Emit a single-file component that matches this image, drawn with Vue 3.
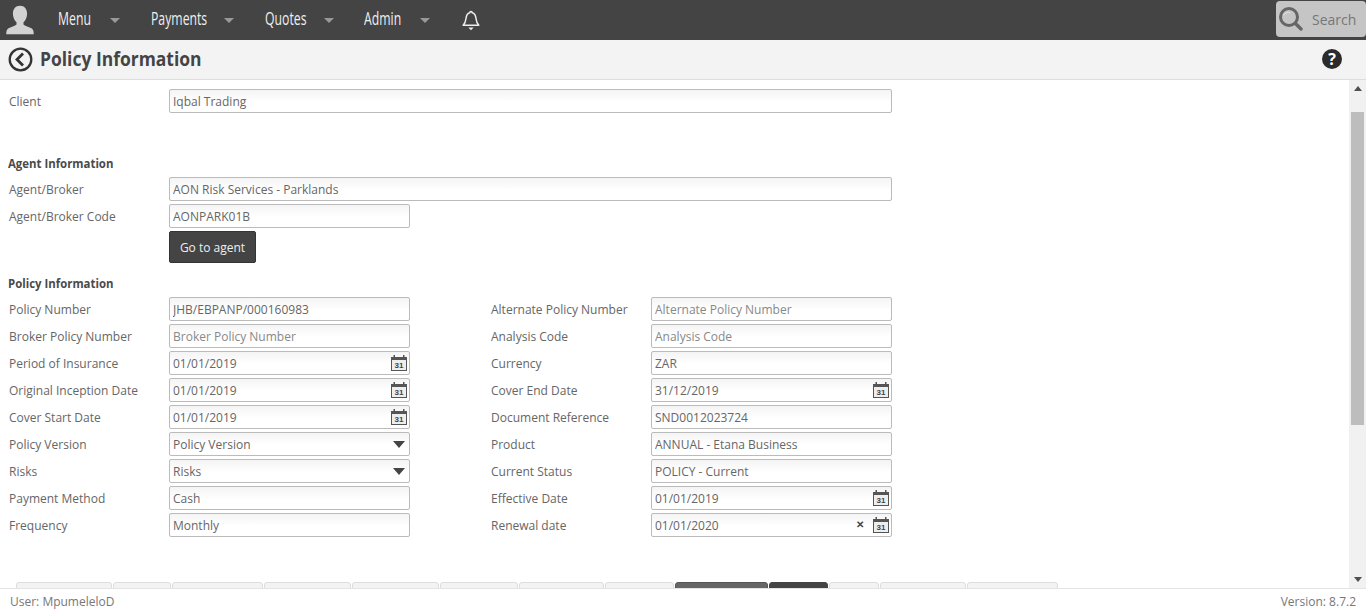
<template>
    <div class="page">
        <header class="top_bar">
            <svg class="user_icon" viewBox="0 0 36 36" width="30" height="30">
                <path d="M18 1c-5.500 0-8.500 4-8.500 9.500 0 4 1.700 8 4.300 10.300v2.700c-1.500 1.700-7 3.100-10 4.800C2 29.500 1.500 32 1.500 35h33c0-3-.5-5.500-2.300-6.700-3-1.700-8.500-3.100-10-4.800v-2.700c2.600-2.300 4.300-6.300 4.300-10.300C26.500 5 23.500 1 18 1z" fill="#d2d2d2"/>
            </svg>
            <nav class="nav_items">
                <div v-for="item in nav_items" :key="item" class="nav_item">
                    <span class="nav_label">{{ item }}</span>
                    <span class="nav_arrow"></span>
                </div>
            </nav>
            <svg class="bell_icon" viewBox="0 0 18 21" width="18" height="21">
                <path d="M9 1.500c-.7 0-1.200.5-1.200 1.200C5.300 3.300 4.300 5.500 4 8.500c-.3 2.800-1 4.800-2.800 6.800h15.600c-1.800-2-2.500-4-2.800-6.800-.3-3-1.300-5.200-3.800-5.800 0-.7-.5-1.200-1.200-1.200z" fill="none" stroke="#eee" stroke-width="1.500" stroke-linejoin="round"/>
                <path d="M6.300 17.600h5.400L9 20.300z" fill="#eee"/>
            </svg>
            <div class="search_box">
                <svg viewBox="0 0 24 24" width="24" height="24">
                    <circle cx="10" cy="10" r="8.500" fill="none" stroke="#666" stroke-width="3"/>
                    <path d="M4.500 8.500c1-2.500 4-3.700 7-2.700" fill="none" stroke="#e4e4e4" stroke-width="1"/>
                    <path d="M16.500 16.500l5.500 5.500" stroke="#666" stroke-width="3.400" stroke-linecap="round"/>
                </svg>
                <span>Search</span>
            </div>
        </header>

        <div class="title_bar">
            <svg class="back_icon" viewBox="0 0 25 25" width="25" height="25">
                <circle cx="12.500" cy="12.500" r="10.800" fill="none" stroke="#333" stroke-width="2.300"/>
                <path d="M15 6.500l-6 6 6 6" fill="none" stroke="#333" stroke-width="2.800"/>
            </svg>
            <h1>Policy Information</h1>
            <div class="help_icon">?</div>
        </div>

        <div class="content_wrap">
            <main class="content">
                <div class="form_row client_row">
                    <label>Client</label>
                    <input class="wide" value="Iqbal Trading" readonly>
                </div>

                <h3 class="agent_head">Agent Information</h3>
                <div class="form_row">
                    <label>Agent/Broker</label>
                    <input class="wide" value="AON Risk Services - Parklands" readonly>
                </div>
                <div class="form_row">
                    <label>Agent/Broker Code</label>
                    <input class="half" value="AONPARK01B" readonly>
                </div>
                <div class="form_row">
                    <label></label>
                    <button class="agent_btn">Go to agent</button>
                </div>

                <h3 class="policy_head">Policy Information</h3>
                <div class="policy_grid">
                    <template v-for="field in policy_fields" :key="field.label">
                        <label>{{ field.label }}</label>
                        <div class="field">
                            <input :value="field.value" :placeholder="field.label" readonly>
                            <span v-if="field.clear" class="clear_x">✕</span>
                            <svg v-if="field.date" class="cal_icon" viewBox="0 0 16 16" width="16" height="16">
                                <rect x="0.500" y="2.500" width="15" height="13" fill="#eee" stroke="#555"/>
                                <rect x="0" y="2" width="16" height="3" fill="#555"/>
                                <rect x="2.500" y="0" width="1.500" height="3" fill="#555"/>
                                <rect x="12" y="0" width="1.500" height="3" fill="#555"/>
                                <text x="8" y="13.300" text-anchor="middle">31</text>
                            </svg>
                            <span v-if="field.select" class="select_arrow"></span>
                        </div>
                    </template>
                </div>

                <div class="tabs">
                    <div
                    v-for="(tab, i) in tabs"
                    :key="i"
                    class="tab"
                    :class="tab.kind"
                    :style="{ width: tab.w + 'px' }"
                    ></div>
                </div>
            </main>

            <div class="scroll_track">
                <span class="scroll_up"></span>
                <div class="scroll_thumb"></div>
                <span class="scroll_down"></span>
            </div>
        </div>

        <footer class="bottom_bar">
            <span>User: MpumeleloD</span>
            <span>Version: 8.7.2</span>
        </footer>
    </div>
</template>

<script setup>
const nav_items = ['Menu', 'Payments', 'Quotes', 'Admin']

const policy_fields = [
    { label: 'Policy Number', value: 'JHB/EBPANP/000160983' },
    { label: 'Alternate Policy Number', value: '' },
    { label: 'Broker Policy Number', value: '' },
    { label: 'Analysis Code', value: '' },
    { label: 'Period of Insurance', value: '01/01/2019', date: true },
    { label: 'Currency', value: 'ZAR' },
    { label: 'Original Inception Date', value: '01/01/2019', date: true },
    { label: 'Cover End Date', value: '31/12/2019', date: true },
    { label: 'Cover Start Date', value: '01/01/2019', date: true },
    { label: 'Document Reference', value: 'SND0012023724' },
    { label: 'Policy Version', value: 'Policy Version', select: true },
    { label: 'Product', value: 'ANNUAL - Etana Business' },
    { label: 'Risks', value: 'Risks', select: true },
    { label: 'Current Status', value: 'POLICY - Current' },
    { label: 'Payment Method', value: 'Cash' },
    { label: 'Effective Date', value: '01/01/2019', date: true },
    { label: 'Frequency', value: 'Monthly' },
    { label: 'Renewal date', value: '01/01/2020', date: true, clear: true },
]

const tabs = [
    { w: 96 }, { w: 58 }, { w: 91 }, { w: 87 }, { w: 87 }, { w: 78 }, { w: 85 },
    { w: 69 }, { w: 93, kind: 'tab_hover' }, { w: 59, kind: 'tab_active' },
    { w: 50 }, { w: 86 }, { w: 91 },
]
</script>

<style>
html, body {
    margin: 0;
    height: 100%;
    overflow: hidden;
    background: #fff;
}
</style>

<style scoped>
.page {
    display: flex;
    flex-direction: column;
    height: 613px;
    font-family: "Open Sans", sans-serif;
    font-size: 12px;
    color: #666;
}
.top_bar {
    display: flex;
    align-items: center;
    flex: 0 0 40px;
    background: #444;
}
.user_icon {
    margin-left: 5px;
    flex: none;
}
.nav_items {
    display: flex;
    margin-left: 23px;
}
.nav_item {
    display: flex;
    align-items: center;
}
.nav_label {
    font-size: 18px;
    line-height: 36px;
    margin-top: -4px;
    color: #eee;
    transform: scaleX(0.68);
    transform-origin: left center;
}
.nav_item:nth-child(1) { width: 93px; }
.nav_item:nth-child(2) { width: 114px; }
.nav_item:nth-child(3) { width: 99px; }
.nav_item:nth-child(4) { width: 98px; }
.nav_arrow {
    position: absolute;
    border-top: 5px solid #999;
    border-left: 5px solid transparent;
    border-right: 5px solid transparent;
}
.nav_item:nth-child(1) .nav_arrow { margin-left: 52px; }
.nav_item:nth-child(2) .nav_arrow { margin-left: 73px; }
.nav_item:nth-child(3) .nav_arrow { margin-left: 59px; }
.nav_item:nth-child(4) .nav_arrow { margin-left: 56px; }
.bell_icon {
    flex: none;
}
.search_box {
    display: flex;
    align-items: center;
    gap: 9px;
    width: 90px;
    height: 36px;
    margin: 0 0 2px auto;
    padding-left: 3px;
    box-sizing: border-box;
    background: #c5c5c5;
    border-radius: 4px;
    color: #777;
    font-size: 14px;
}
.title_bar {
    display: flex;
    align-items: center;
    flex: 0 0 40px;
    padding: 0 24px 1px 8px;
    box-sizing: border-box;
    background: #f3f3f3;
    border-bottom: 1px solid #ddd;
}
.title_bar h1 {
    margin: 0 0 2px 7px;
    font-size: 20px;
    font-weight: 700;
    color: #444;
    transform: scaleX(0.873);
    transform-origin: left center;
}
.help_icon {
    width: 20px;
    height: 20px;
    margin-left: auto;
    border-radius: 50%;
    background: #2b2b2b;
    color: #fff;
    font-size: 16px;
    font-weight: 700;
    line-height: 20px;
    text-align: center;
}
.content_wrap {
    display: flex;
    flex: 1;
    min-height: 0;
    border-bottom: 1px solid #e4e4e4;
}
.content {
    flex: 1;
    overflow: hidden;
    padding: 9px 0 0 9px;
}
.form_row {
    display: flex;
    align-items: flex-start;
    margin-bottom: 3px;
}
.form_row label {
    flex: 0 0 160px;
    height: 24px;
    line-height: 26px;
}
.client_row {
    margin-bottom: 0;
}
h3 {
    margin: 0 0 0 -1px;
    font-size: 12px;
    font-weight: 700;
    line-height: 16px;
    color: #4a4a4a;
    transform: scaleX(0.95);
    transform-origin: left center;
}
.agent_head {
    padding-top: 43px;
    padding-bottom: 5px;
}
.policy_head {
    padding-top: 10px;
    padding-bottom: 5px;
}
input {
    display: block;
    box-sizing: border-box;
    height: 24px;
    width: 100%;
    padding: 0 3px;
    border: 1px solid #bbb;
    border-radius: 2px;
    background: linear-gradient(#f4f4f4, #fff 55%);
    font-family: inherit;
    font-size: 12px;
    color: #666;
    outline: none;
}
input::placeholder {
    color: #888;
    opacity: 1;
}
input.wide {
    width: 723px;
}
input.half {
    width: 241px;
}
.agent_btn {
    width: 87px;
    height: 32px;
    border: 1px solid #333;
    border-radius: 2px;
    background: #444;
    color: #eee;
    font-family: inherit;
    font-size: 12px;
    padding: 0;
}
.policy_grid {
    display: grid;
    grid-template-columns: 160px 241px 241px 241px;
    row-gap: 3px;
}
.policy_grid label {
    height: 24px;
    line-height: 26px;
}
.policy_grid label:nth-child(4n + 3) {
    margin-left: 81px;
}
.field {
    position: relative;
}
.cal_icon {
    position: absolute;
    right: 3px;
    top: 4px;
}
.cal_icon text {
    font-family: "Liberation Sans", sans-serif;
    font-size: 8px;
    font-weight: 700;
    fill: #444;
}
.clear_x {
    position: absolute;
    right: 28px;
    top: 4px;
    font-size: 10px;
    font-weight: 700;
    color: #444;
}
.select_arrow {
    position: absolute;
    right: 5px;
    top: 9px;
    border-top: 7px solid #444;
    border-left: 6px solid transparent;
    border-right: 6px solid transparent;
}
.tabs {
    display: flex;
    gap: 1px;
    height: 6px;
    margin: 45px 0 0 7px;
}
.tab {
    flex: none;
    height: 40px;
    box-sizing: border-box;
    background: #f3f3f3;
    border: 1px solid #ddd;
    border-radius: 3px 3px 0 0;
}
.tab_hover {
    background: #666;
    border-color: #555;
}
.tab_active {
    background: #444;
    border-color: #444;
}
.scroll_track {
    position: relative;
    flex: 0 0 17px;
    background: #f1f1f1;
}
.scroll_thumb {
    position: absolute;
    top: 32px;
    left: 2px;
    width: 13px;
    height: 313px;
    background: #bdbdbd;
}
.scroll_up, .scroll_down {
    position: absolute;
    left: 5px;
    border-left: 4px solid transparent;
    border-right: 4px solid transparent;
}
.scroll_up {
    top: 6px;
    border-bottom: 5px solid #505050;
}
.scroll_down {
    bottom: 6px;
    border-top: 5px solid #505050;
}
.bottom_bar {
    display: flex;
    align-items: center;
    justify-content: space-between;
    flex: 0 0 24px;
    padding: 0 10px;
    color: #777;
}
</style>
